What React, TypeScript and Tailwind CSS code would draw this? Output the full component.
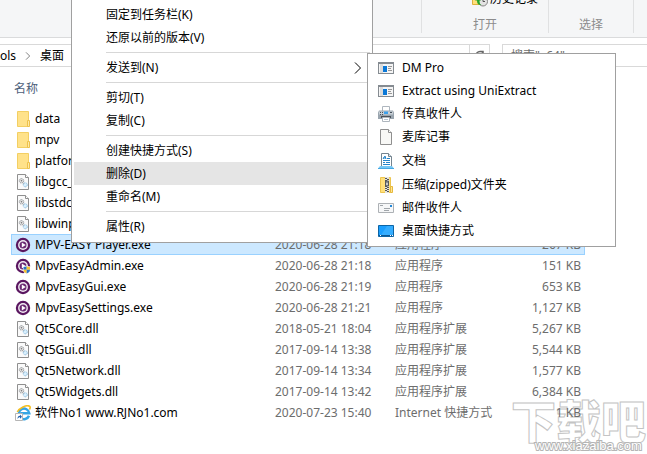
import React from "react";

type IconProps = { className?: string };

const FolderIcon = () => (
  <svg width="16" height="16" viewBox="0 0 16 16" aria-hidden="true">
    <path d="M2.500.5h11v15h-11z" fill="#ffe28a" stroke="#f3cf63" />
    <path d="M12.500 9.500h2v6h-2z" fill="#ffe9a6" stroke="#edc24c" />
  </svg>
);

const DllIcon = () => (
  <svg width="16" height="16" viewBox="0 0 16 16" aria-hidden="true">
    <path d="M2.500.5h8l3 3v12h-11z" fill="#fafafa" stroke="#8f8f8f" />
    <path d="M10.500.5v3h3" fill="#fff" stroke="#8f8f8f" />
    <circle cx="6.500" cy="6.800" r="2.200" fill="#e4e4e4" stroke="#8b8f94" strokeDasharray="1.200 .6" />
    <circle cx="6.500" cy="6.800" r=".8" fill="#777" />
    <path d="M7.500 8.500l2.500 2" stroke="#999" />
    <circle cx="10.300" cy="10.800" r="2" fill="#d9effc" stroke="#86b9dc" strokeDasharray="1.200 .6" />
  </svg>
);

const PlayerIcon = ({ shield = false }: { shield?: boolean }) => (
  <svg width="16" height="16" viewBox="0 0 16 16" aria-hidden="true">
    <circle cx="8" cy="8" r="7.200" fill="#5a1660" />
    <circle cx="8" cy="8" r="4.900" fill="#f3eef4" />
    <circle cx="8" cy="8" r="3.500" fill="#6b2a72" />
    <path d="M6.800 5.600l3.900 2.400-3.900 2.400z" fill="#fff" />
    {shield && (
      <g>
        <path d="M8 8.500q2.200 0 3.800-1 1.600 1 3.700 1v3q0 3-3.700 4.500Q8 14.500 8 11.500z" fill="#fff" />
        <path d="M8.500 9q2 0 3.200-.8v3.600H8.500z" fill="#2a72c8" />
        <path d="M11.700 8.200q1.300.8 3.300.8v2.800h-3.300z" fill="#f9c52c" />
        <path d="M8.500 11.800h3.200v3.700q-3.200-1.200-3.200-3.700z" fill="#f9c52c" />
        <path d="M11.700 11.800H15q0 2.500-3.300 3.700z" fill="#2a72c8" />
      </g>
    )}
  </svg>
);

const BrowserLinkIcon = () => (
  <svg width="16" height="16" viewBox="0 0 16 16" aria-hidden="true">
    <path d="M14 10.800a5.300 5.300 0 1 1 .3-2.500H5.500" fill="none" stroke="#35a5e4" strokeWidth="2.500" />
    <path d="M2.300 7C4 3.300 11.500-.7 14.500 1.200c1 .7.700 2-.1 3.300" fill="none" stroke="#f5bf22" strokeWidth="1.600" />
    <path d="M.5 8.500h7v7h-7z" fill="#fff" stroke="#b5b5b5" />
    <path d="M2.500 14c0-2 .5-3 2.500-3.200V9.500l2 2.200-2 2v-1.500c-1.200 0-1.800.6-2.500 1.800z" fill="#1f5fae" />
  </svg>
);

const ProgramIcon = () => (
  <svg width="16" height="16" viewBox="0 0 16 16" aria-hidden="true">
    <path d="M0 2h16v12H0z" fill="#858b91" />
    <path d="M1 4h14v9H1z" fill="#f5f5f5" />
    <path d="M2 4h3v9H2z" fill="#dcdcdc" />
    <path d="M5 6h4v6H5z" fill="#0a78d7" />
    <path d="M10 6.500h4M10 8.500h3M10 10.500h4" stroke="#979797" />
  </svg>
);

const FaxIcon = () => (
  <svg width="16" height="16" viewBox="0 0 16 16" aria-hidden="true">
    <path d="M4.500.5h7v5h-7z" fill="#fff" stroke="#aeb6be" />
    <path d="M1 4.500h14l1 2V13H0V6.500z" fill="#9aa5af" />
    <path d="M1 5.500h14v3H1z" fill="#c9d0d6" />
    <path d="M2 6h1v1H2zM4 6h1v1H4zM2 8h1v1H2zM4 8h1v1H4z" fill="#48525c" />
    <path d="M6 5.500h4v2.500H6z" fill="#3aa0ec" />
    <path d="M12 6h2v1h-2z" fill="#48525c" />
    <path d="M3 10h10v2H3z" fill="#4a5157" />
    <path d="M4.500 11.500h7v4h-7z" fill="#fff" stroke="#aeb6be" />
    <path d="M6 13.500h4" stroke="#b7c4d0" />
  </svg>
);

const BlankPageIcon = () => (
  <svg width="16" height="16" viewBox="0 0 16 16" aria-hidden="true">
    <path d="M2.500.5h8l3 3v12h-11z" fill="#f8f8f6" stroke="#8f8f8f" />
    <path d="M10.500.5v3h3" fill="#fff" stroke="#8f8f8f" />
  </svg>
);

const DocumentsIcon = () => (
  <svg width="16" height="16" viewBox="0 0 16 16" aria-hidden="true">
    <path d="M3.500.5h7l3 3v11h-10z" fill="#fff" stroke="#74848f" />
    <path d="M10.500.5v3h3" fill="#dceaf4" stroke="#74848f" />
    <path d="M5 6l2-3 1 3M5 5h3M9 5.500h3M5 7.500h7M5 9.500h2M8 9.500h4M5 11.500h7" fill="none" stroke="#2585cb" />
    <path d="M2 13h12l2 2.500H0z" fill="#76c7f4" />
    <path d="M0 15h16v1H0z" fill="#45a8e4" />
  </svg>
);

const ZipIcon = () => (
  <svg width="16" height="16" viewBox="0 0 16 16" aria-hidden="true">
    <path d="M2.500.5h10v15h-10z" fill="#ffdf7b" stroke="#ecc550" />
    <path d="M12.500 9.500h2v6h-2z" fill="#ffe59a" stroke="#e6b93c" />
    <path d="M7 0h4v16H7z" fill="#e4e4e0" />
    <path d="M7 1.500h2M9 2.500h2M7 3.500h2M7 9.500h2M9 10.500h2M7 11.500h2M9 12.500h2M7 13.500h2M9 14.500h2" stroke="#555" />
    <path d="M7.500 4h3v5h-3z" fill="#8b8f92" stroke="#54595c" />
    <path d="M9 6v2" stroke="#fff" />
  </svg>
);

const MailIcon = () => (
  <svg width="16" height="16" viewBox="0 0 16 16" aria-hidden="true">
    <path d="M.5 3.500h15v9H.5z" fill="#f6f7f8" stroke="#adb1b5" />
    <path d="M2 5.500h3M6 8.500h6M6 10.500h5" stroke="#a1a6ab" />
    <path d="M12 5h2v2h-2z" fill="#2387d8" />
  </svg>
);

const DesktopIcon = () => (
  <svg width="16" height="16" viewBox="0 0 16 16" aria-hidden="true">
    <path d="M.5 2.500h15v11H.5z" fill="#1a9fff" stroke="#0d65a5" />
    <path d="M9 3h6v9H3z" fill="#35adff" />
    <path d="M1 12h14v1H1z" fill="#0d5793" />
    <path d="M2 12h1v1H2zM12 12h1v1h-1zM14 12h1v1h-1z" fill="#fff" />
  </svg>
);

const HistoryIcon = () => (
  <svg width="16" height="16" viewBox="0 0 16 16" aria-hidden="true">
    <path d="M.5 2.500h11v11H.5z" fill="#ffdf7b" stroke="#ddb13c" />
    <circle cx="11" cy="10.500" r="4.500" fill="#e3e3e3" stroke="#858585" />
    <path d="M11 7.500v3h2" fill="none" stroke="#555" />
    <path d="M3 9.500l3-3 3 3H7.500q0 4 2 4.500Q5 14.500 5 9.500z" fill="#27a52b" />
  </svg>
);

const Chevron = ({ className }: IconProps) => (
  <svg className={className} width="8" height="12" viewBox="0 0 8 12" aria-hidden="true">
    <path d="M1 .5L6.500 6 1 11.500" fill="none" stroke="currentColor" />
  </svg>
);

type FileRow = {
  name: string;
  icon: React.ReactNode;
  date?: string;
  type?: string;
  size?: string;
  selected?: boolean;
};

const files: FileRow[] = [
  { name: "data", icon: <FolderIcon /> },
  { name: "mpv", icon: <FolderIcon /> },
  { name: "platforms", icon: <FolderIcon /> },
  { name: "libgcc_s", icon: <DllIcon /> },
  { name: "libstdc++", icon: <DllIcon /> },
  { name: "libwinp", icon: <DllIcon /> },
  { name: "MPV-EASY Player.exe", icon: <PlayerIcon />, date: "2020-06-28 21:18", type: "应用程序", size: "267 KB", selected: true },
  { name: "MpvEasyAdmin.exe", icon: <PlayerIcon shield />, date: "2020-06-28 21:18", type: "应用程序", size: "151 KB" },
  { name: "MpvEasyGui.exe", icon: <PlayerIcon />, date: "2020-06-28 21:19", type: "应用程序", size: "653 KB" },
  { name: "MpvEasySettings.exe", icon: <PlayerIcon />, date: "2020-06-28 21:21", type: "应用程序", size: "1,127 KB" },
  { name: "Qt5Core.dll", icon: <DllIcon />, date: "2018-05-21 18:04", type: "应用程序扩展", size: "5,267 KB" },
  { name: "Qt5Gui.dll", icon: <DllIcon />, date: "2017-09-14 13:38", type: "应用程序扩展", size: "5,544 KB" },
  { name: "Qt5Network.dll", icon: <DllIcon />, date: "2017-09-14 13:34", type: "应用程序扩展", size: "1,577 KB" },
  { name: "Qt5Widgets.dll", icon: <DllIcon />, date: "2017-09-14 13:42", type: "应用程序扩展", size: "6,384 KB" },
  { name: "软件No1 www.RJNo1.com", icon: <BrowserLinkIcon />, date: "2020-07-23 15:40", type: "Internet 快捷方式", size: "1 KB" },
];

const menuGroups: string[][] = [
  ["固定到任务栏(K)", "还原以前的版本(V)"],
  ["发送到(N)"],
  ["剪切(T)", "复制(C)"],
  ["创建快捷方式(S)", "删除(D)", "重命名(M)"],
  ["属性(R)"],
];

const targets = [
  { label: "DM Pro", icon: <ProgramIcon /> },
  { label: "Extract using UniExtract", icon: <ProgramIcon /> },
  { label: "传真收件人", icon: <FaxIcon /> },
  { label: "麦库记事", icon: <BlankPageIcon /> },
  { label: "文档", icon: <DocumentsIcon /> },
  { label: "压缩(zipped)文件夹", icon: <ZipIcon /> },
  { label: "邮件收件人", icon: <MailIcon /> },
  { label: "桌面快捷方式", icon: <DesktopIcon /> },
];

function Ribbon() {
  return (
    <header className="flex h-[38px] justify-end overflow-hidden border-b border-[#dadbdc] bg-[#f5f6f7] pr-[13px] text-[#8c8c8c]">
      <section className="mb-1 flex w-32 flex-col items-center border-x border-[#e0e1e2]">
        <button className="-mt-2.5 ml-10 flex h-[18px] shrink-0 items-center gap-0.5 text-black">
          <HistoryIcon />
          历史记录
        </button>
        <span className="mt-2">打开</span>
      </section>
      <section className="mb-1 flex w-[85px] flex-col items-center border-r border-[#e0e1e2] pt-4">
        <span>选择</span>
      </section>
    </header>
  );
}

function AddressBar() {
  return (
    <div className="mt-1.5 flex h-[23px] gap-3">
      <nav className="flex flex-1 items-center border-y border-[#d9d9d9]">
        <button>ols</button>
        <Chevron className="mx-2 h-2 w-2 text-[#444]" />
        <button>桌面</button>
      </nav>
      <div className="-ml-3 flex w-[21px] items-center justify-center border border-[#d9d9d9]">
        <button aria-label="刷新" className="h-3 w-3">
          <svg width="12" height="12" viewBox="0 0 12 12" aria-hidden="true">
            <path d="M9.500 3A4.300 4.300 0 1 0 10.300 7M5.500 1.500H9v3.500" fill="none" stroke="#666" strokeWidth="1.500" />
          </svg>
        </button>
      </div>
      <input
        aria-label="搜索"
        placeholder={'搜索"x64"'}
        className="w-[145px] border border-r-0 border-[#d9d9d9] bg-white px-2 outline-none placeholder:text-[#6d6d6d]"
      />
    </div>
  );
}

function FileTable() {
  return (
    <table className="relative mt-2.5 ml-[11px] w-[574px] table-fixed border-collapse text-left text-[#6d6d6d]">
      <colgroup>
        <col className="w-[264px]" />
        <col className="w-[120px]" />
        <col className="w-[120px]" />
        <col />
      </colgroup>
      <thead>
        <tr className="h-[31px] align-top">
          <th className="py-[3px] pl-[3px] font-normal text-[#4c607a]">名称</th>
          <th aria-label="修改日期" />
          <th aria-label="类型" />
          <th aria-label="大小" />
        </tr>
      </thead>
      <tbody>
        {files.map((f) => (
          <tr
            key={f.name}
            className={f.selected ? "h-[21px] bg-[#cce8ff] outline -outline-offset-1 outline-[#99d1ff]" : "h-[21px]"}
          >
            <td className="p-0 pl-1">
              <div className="flex items-center gap-1 whitespace-nowrap text-black">
                {f.icon}
                {f.name}
              </div>
            </td>
            <td className="p-0 whitespace-nowrap">{f.date}</td>
            <td className="p-0 whitespace-nowrap">{f.type}</td>
            <td className="p-0 pr-1 text-right whitespace-nowrap">{f.size}</td>
          </tr>
        ))}
      </tbody>
    </table>
  );
}

function ContextMenu() {
  return (
    <div
      role="menu"
      className="absolute top-0 left-[71px] w-[302px] border border-t-0 border-[#a0a0a0] bg-white px-0.5 pt-[3px] pb-1"
    >
      {menuGroups.map((group, i) => (
        <div key={group[0]}>
          {i > 0 && <hr className="my-[3px] ml-8 border-[#d7d7d7]" />}
          {group.map((label) => (
            <button
              key={label}
              role="menuitem"
              className={
                label.startsWith("删除")
                  ? "flex h-[23px] w-full items-center justify-between bg-[#e5e5e5] pr-2 pl-8"
                  : "flex h-[23px] w-full items-center justify-between pr-2 pl-8"
              }
            >
              {label}
              {label.startsWith("发送到") && <Chevron />}
            </button>
          ))}
        </div>
      ))}
    </div>
  );
}

function SendToMenu() {
  return (
    <div
      role="menu"
      className="absolute top-[53px] left-[367px] w-[249px] border border-[#a0a0a0] bg-white px-0.5 pt-0.5 pb-1"
    >
      {targets.map((t, i) => (
        <button
          key={t.label}
          role="menuitem"
          className={
            i === 3 || i === 4
              ? "flex h-6 w-full items-center gap-2 px-2"
              : "flex h-[23px] w-full items-center gap-2 px-2"
          }
        >
          {t.icon}
          {t.label}
        </button>
      ))}
    </div>
  );
}

function Watermark() {
  return (
    <svg
      className="pointer-events-none absolute right-0 bottom-0"
      width="136"
      height="58"
      viewBox="0 0 136 58"
      fontFamily="'Noto Sans CJK SC', sans-serif"
    >
      <text x="0" y="43" fontSize="45" fontWeight="900" fill="#fff" stroke="#c4c4c4" strokeWidth="1">
        下载吧
      </text>
      <text x="24" y="54" fontFamily="'Liberation Sans', sans-serif" fontSize="13" fill="#fff" stroke="#b5b5b5" strokeWidth="2" paintOrder="stroke">
        www.xiazaiba.com
      </text>
    </svg>
  );
}

export default function App() {
  return (
    <main className="relative min-h-screen overflow-hidden bg-white font-['Noto_Sans','Noto_Sans_CJK_SC',sans-serif] text-[12px] leading-[18px] text-black">
      <Watermark />
      <Ribbon />
      <AddressBar />
      <FileTable />
      <ContextMenu />
      <SendToMenu />
    </main>
  );
}
